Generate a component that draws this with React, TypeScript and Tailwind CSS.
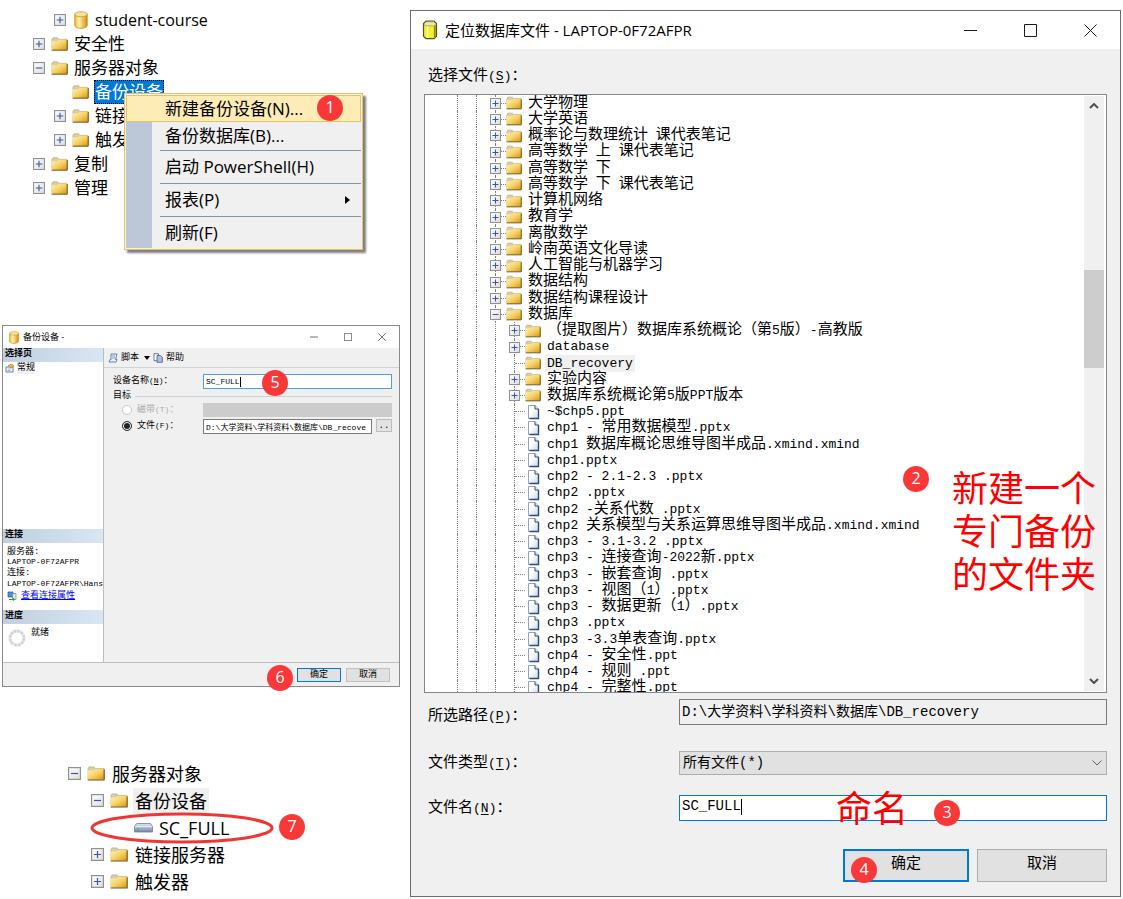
import { ReactNode } from "react";

const CJK_RUN = /([\u2e80-\uffef]+)/;

interface TreeNode {
  label: string;
  depth: number;
  kind: "folder" | "file";
  state?: "open" | "closed";
  selected?: boolean;
}

const folder = (
  label: string,
  depth: number,
  state?: "open" | "closed",
  selected = false,
): TreeNode => ({ label, depth, kind: "folder", state, selected });

const file = (label: string): TreeNode => ({ label, depth: 3, kind: "file" });

const nodes: TreeNode[] = [
  folder("大学物理", 2, "closed"),
  folder("大学英语", 2, "closed"),
  folder("概率论与数理统计 课代表笔记", 2, "closed"),
  folder("高等数学 上 课代表笔记", 2, "closed"),
  folder("高等数学 下", 2, "closed"),
  folder("高等数学 下 课代表笔记", 2, "closed"),
  folder("计算机网络", 2, "closed"),
  folder("教育学", 2, "closed"),
  folder("离散数学", 2, "closed"),
  folder("岭南英语文化导读", 2, "closed"),
  folder("人工智能与机器学习", 2, "closed"),
  folder("数据结构", 2, "closed"),
  folder("数据结构课程设计", 2, "closed"),
  folder("数据库", 2, "open"),
  folder("（提取图片）数据库系统概论（第5版）-高教版", 3, "closed"),
  folder("database", 3, "closed"),
  folder("DB_recovery", 3, undefined, true),
  folder("实验内容", 3, "closed"),
  folder("数据库系统概论第5版PPT版本", 3, "closed"),
  file("~$chp5.ppt"),
  file("chp1 - 常用数据模型.pptx"),
  file("chp1 数据库概论思维导图半成品.xmind.xmind"),
  file("chp1.pptx"),
  file("chp2 - 2.1-2.3 .pptx"),
  file("chp2 .pptx"),
  file("chp2 -关系代数 .pptx"),
  file("chp2 关系模型与关系运算思维导图半成品.xmind.xmind"),
  file("chp3 - 3.1-3.2 .pptx"),
  file("chp3 - 连接查询-2022新.pptx"),
  file("chp3 - 嵌套查询 .pptx"),
  file("chp3 - 视图（1）.pptx"),
  file("chp3 - 数据更新（1）.pptx"),
  file("chp3 .pptx"),
  file("chp3 -3.3单表查询.pptx"),
  file("chp4 - 安全性.ppt"),
  file("chp4 - 规则 .ppt"),
  file("chp4 - 完整性.ppt"),
];

// Chinese runs are set one step larger than the monospaced Latin runs
const Mixed = ({ text, small = false }: { text: string; small?: boolean }) => (
  <>
    {text.split(CJK_RUN).map((run, i) => {
      const cjk = i % 2 === 1;
      const size = small
        ? cjk
          ? "text-[9px]"
          : "text-[8px]"
        : cjk
          ? "text-[15px]"
          : "text-[13px]";
      return (
        <span key={i} className={size}>
          {run}
        </span>
      );
    })}
  </>
);

const HotLabel = ({
  text,
  hotKey,
  small = false,
}: {
  text: string;
  hotKey: string;
  small?: boolean;
}) => (
  <>
    <Mixed text={`${text}(`} small={small} />
    <u className={small ? "text-[8px]" : "text-[13px] underline-offset-2"}>{hotKey}</u>
    <Mixed text=")：" small={small} />
  </>
);

const Gradients = () => (
  <svg width="0" height="0" className="absolute" aria-hidden="true">
    <defs>
      <linearGradient id="folder" x1="0" y1="0" x2="1" y2="1">
        <stop offset="0" stopColor="#fff3b8" />
        <stop offset="0.5" stopColor="#f6d264" />
        <stop offset="1" stopColor="#d8930c" />
      </linearGradient>
      <linearGradient id="db" x1="0" y1="0" x2="1" y2="0">
        <stop offset="0" stopColor="#f0b93a" />
        <stop offset="0.35" stopColor="#fff0a8" />
        <stop offset="1" stopColor="#d78f08" />
      </linearGradient>
      <linearGradient id="page" x1="0" y1="0" x2="1" y2="1">
        <stop offset="0.4" stopColor="#ffffff" />
        <stop offset="1" stopColor="#c3d6ee" />
      </linearGradient>
      <linearGradient id="box" x1="0" y1="0" x2="1" y2="1">
        <stop offset="0" stopColor="#ffffff" />
        <stop offset="1" stopColor="#dcdcdc" />
      </linearGradient>
      <linearGradient id="drive" x1="0" y1="0" x2="0" y2="1">
        <stop offset="0" stopColor="#dfe6f2" />
        <stop offset="1" stopColor="#7484a8" />
      </linearGradient>
    </defs>
  </svg>
);

const FolderIcon = ({ className = "w-4 h-3.5" }: { className?: string }) => (
  <svg viewBox="0 0 17 14" className={`shrink-0 ${className}`} aria-hidden="true">
    <path d="M1 12V2.2L2 .8h4.6l1.2 1.6H16V12z" fill="#d9cfa6" stroke="#b7a777" strokeWidth="0.7" />
    <path d="M.6 4.2H6l1.6-1.4h8.8V13H.6z" fill="url(#folder)" />
    <path d="M.6 13.2h15.6V3" fill="none" stroke="#6f5318" strokeWidth="1" />
  </svg>
);

const FileIcon = () => (
  <svg viewBox="0 0 16 16" className="w-4 h-4 shrink-0" aria-hidden="true">
    <path d="M3.5 1.5h6.5l3.5 3.5v9.5h-10z" fill="url(#page)" stroke="#8fa3c2" />
    <path d="M10 1.5V5h3.5" fill="#e8eef7" stroke="#2f4d78" />
    <path d="M13.5 5v9.5h-9" fill="none" stroke="#2f4d78" strokeWidth="1.4" />
  </svg>
);

const DatabaseIcon = ({ className }: { className: string }) => (
  <svg viewBox="0 0 14 18" className={`shrink-0 ${className}`} aria-hidden="true">
    <path d="M.8 3.2v11.4c0 1.5 2.8 2.7 6.2 2.7s6.2-1.2 6.2-2.7V3.2z" fill="url(#db)" stroke="#b97c0a" strokeWidth="0.7" />
    <ellipse cx="7" cy="3.2" rx="6.2" ry="2.5" fill="#fbe39a" stroke="#c4902a" strokeWidth="0.7" />
  </svg>
);

const YellowCylinder = () => (
  <svg viewBox="0 0 16 20" className="w-4 h-5 shrink-0" aria-hidden="true">
    <path d="M1.5 3.5v12.8L4 18.6h8l2.5-2.3V3.5L12 1.2H4z" fill="#f3ee2e" stroke="#55550f" strokeWidth="1.2" />
    <path d="M1.8 4 4.2 1.8h7.6L14.2 4 12 5.8H4z" fill="#e9e9c0" stroke="#8f8f3a" strokeWidth="0.6" />
    <path d="M5.5 6.5v11" stroke="#ffffc8" strokeWidth="1.6" />
    <path d="M12.8 5.5V17" stroke="#8c8a12" strokeWidth="1.8" />
  </svg>
);

const Expander = ({
  open,
  label,
  className = "w-3 h-3",
}: {
  open: boolean;
  label: string;
  className?: string;
}) => (
  <button type="button" aria-label={label} aria-expanded={open} className={`shrink-0 ${className}`}>
    <svg viewBox="0 0 11 11" className="w-full h-full block">
      <rect x="0.5" y="0.5" width="10" height="10" fill="url(#box)" stroke="#919191" />
      <path d={open ? "M2.5 5.5h6" : "M2.5 5.5h6M5.5 2.5v6"} stroke="#3a57a5" strokeWidth="1" />
    </svg>
  </button>
);

const Badge = ({ n, className }: { n: number; className: string }) => (
  <span
    className={`absolute w-[26px] h-[26px] rounded-full bg-[#fb3838] text-white text-base leading-6 text-center font-['Open_Sans',sans-serif] ${className}`}
  >
    {n}
  </span>
);

const WindowControls = ({ className, iconClass }: { className: string; iconClass: string }) => (
  <div className="ml-auto flex self-stretch">
    {[
      { name: "最小化", d: "M0 6.5h13" },
      { name: "最大化", d: "M.5 .5h12v12H.5z" },
      { name: "关闭", d: "M.5 .5l12 12M12.5 .5l-12 12" },
    ].map(({ name, d }) => (
      <button key={name} type="button" aria-label={name} className={`flex items-center justify-center ${className}`}>
        <svg viewBox="0 0 13 13" className={iconClass}>
          <path d={d} fill="none" stroke="#1a1a1a" />
        </svg>
      </button>
    ))}
  </div>
);

const ExplorerRow = ({
  label,
  indent,
  state,
  icon,
  children,
}: {
  label: string;
  indent: string;
  state?: "open" | "closed";
  icon?: ReactNode;
  children?: ReactNode;
}) => (
  <li className={`flex items-center h-6 gap-[6px] ${indent}`}>
    {state ? <Expander open={state === "open"} label={label} /> : <span className="w-3" />}
    <span className="w-[17px] flex justify-center">{icon ?? <FolderIcon className="w-[17px] h-3.5" />}</span>
    {children ?? <span>{label}</span>}
  </li>
);

const ContextMenu = () => (
  <div
    role="menu"
    className="absolute left-[124px] top-[93px] w-[239px] border border-[#e5c365] bg-[#f0f0f0] p-px shadow-[3px_3px_2px_rgba(0,0,0,0.5)]"
  >
    <button
      type="button"
      role="menuitem"
      className="relative block w-full h-[27px] pl-[38px] text-left border border-[#e5c365] bg-[#fdecb5]"
    >
      新建备份设备(N)...
      <Badge n={1} className="left-[190px] -top-px" />
    </button>
    <div className="border-l-[26px] border-[#bcc7d8] pl-2">
      <button type="button" role="menuitem" className="block w-full h-[28px] pl-[5px] text-left">
        备份数据库(B)...
      </button>
      <hr className="border-t-1 border-[#8595ad]" />
      <button type="button" role="menuitem" className="block w-full h-8 pl-[5px] text-left">
        启动 PowerShell(H)
      </button>
      <hr className="border-t-1 border-[#8595ad]" />
      <button type="button" role="menuitem" className="flex items-center justify-between w-full h-8 pl-[5px] pr-[11px]">
        报表(P)
        <svg viewBox="0 0 5 8" className="w-[5px] h-2">
          <path d="M0 0l5 4-5 4z" />
        </svg>
      </button>
      <hr className="border-t-1 border-[#8595ad]" />
      <button type="button" role="menuitem" className="block w-full h-[31px] pl-[5px] text-left">
        刷新(F)
      </button>
    </div>
  </div>
);

const ObjectExplorer = () => (
  <section className="relative pt-2 text-[17px] leading-6 font-['Open_Sans','Noto_Sans_CJK_SC',sans-serif]">
    <ul>
      <ExplorerRow
        label="student-course"
        indent="pl-[54px]"
        state="closed"
        icon={<DatabaseIcon className="w-3.5 h-[18px]" />}
      >
        <span className="text-base">student-course</span>
      </ExplorerRow>
      <ExplorerRow label="安全性" indent="pl-[33px]" state="closed" />
      <ExplorerRow label="服务器对象" indent="pl-[33px]" state="open" />
      <ExplorerRow label="备份设备" indent="pl-[54px]">
        <span className="-ml-px px-px bg-[#0078d7] text-white outline-1 outline-dotted -outline-offset-1 outline-black">
          备份设备
        </span>
      </ExplorerRow>
      <ExplorerRow label="链接服务器" indent="pl-[54px]" state="closed" />
      <ExplorerRow label="触发器" indent="pl-[54px]" state="closed" />
      <ExplorerRow label="复制" indent="pl-[33px]" state="closed" />
      <ExplorerRow label="管理" indent="pl-[33px]" state="closed" />
    </ul>
    <ContextMenu />
  </section>
);

const PanelHeader = ({ children }: { children: ReactNode }) => (
  <h3 className="h-3.5 pl-0.5 leading-3 text-[9px] font-bold bg-linear-to-r from-[#bfcfdf] to-[#d9e7f4]">
    {children}
  </h3>
);

const BackupDeviceDialog = () => (
  <section className="relative ml-0.5 border border-[#8a8a8a] bg-[#f0f0f0] text-[9px] leading-3 font-['Liberation_Mono','Noto_Sans_CJK_SC',monospace]">
    <header className="flex items-center h-[22px] pl-1.5 bg-white">
      <DatabaseIcon className="w-2.5 h-[13px]" />
      <h2 className="ml-1 font-['Open_Sans','Noto_Sans_CJK_SC',sans-serif]">备份设备 -</h2>
      <WindowControls className="w-[34px]" iconClass="w-2 h-2" />
    </header>
    <div className="flex h-[315px] border-b border-[#bdbdbd]">
      <aside className="w-[101px] shrink-0 flex flex-col bg-white border-r border-[#bdbdbd]">
        <PanelHeader>选择页</PanelHeader>
        <div className="flex items-center gap-0.5 pl-0.5 h-3">
          <svg viewBox="0 0 10 10" className="w-2.5 h-2.5">
            <path d="M1 4h7v5H1z" fill="#fff" stroke="#5d7fae" />
            <path d="M2.5 6h4M2.5 7.5h3" stroke="#5d7fae" strokeWidth="0.6" />
            <path d="M3 2.5l4-1.5 2 2-3 2z" fill="#f0b73c" stroke="#a9761a" strokeWidth="0.6" />
          </svg>
          <span className="bg-[#f0f0f0]">常规</span>
        </div>
        <div className="mt-auto">
          <PanelHeader>连接</PanelHeader>
          <div className="pl-1 pt-1 h-[67px]">
            <p className="leading-[10px]">服务器:</p>
            <p className="leading-[10px] text-[8px]">LAPTOP-0F72AFPR</p>
            <p className="leading-3">连接:</p>
            <p className="leading-[9px] text-[8px] whitespace-nowrap overflow-hidden">LAPTOP-0F72AFPR\Hans</p>
            <p className="flex items-center gap-1 mt-0.5 h-3">
              <svg viewBox="0 0 10 10" className="w-2.5 h-2.5">
                <path d="M1 1h5v5H1z" fill="#4a8fe0" stroke="#35557f" strokeWidth="0.7" />
                <path d="M5.5 2.5h3.5v6H5.5z" fill="#dbe6f2" stroke="#6b86a8" strokeWidth="0.7" />
                <path d="M2 8.5h5M5.5 6.8L7.5 8.5 5.5 10" fill="none" stroke="#2f9c35" />
              </svg>
              <a href="#properties" className="text-[#0000ff] underline">
                查看连接属性
              </a>
            </p>
          </div>
          <PanelHeader>进度</PanelHeader>
          <div className="flex gap-[5px] pl-[5px] pt-[3px] h-[38px]">
            <svg viewBox="0 0 18 18" className="w-[18px] h-[18px] mt-0.5">
              <circle cx="9" cy="9" r="7" fill="none" stroke="#d4d4d4" strokeWidth="3" strokeDasharray="3 0.66" />
            </svg>
            <span>就绪</span>
          </div>
        </div>
      </aside>

      <div className="flex-1 min-w-0">
        <div className="flex items-center h-5 pl-1 gap-[3px] border-b border-[#cfd3da]">
          <button type="button" className="flex items-center gap-[3px]">
            <svg viewBox="0 0 10 10" className="w-2.5 h-2.5">
              <path d="M3 1h6L7.5 6.5H9L8 9H1l1-2.5h1z" fill="#e8f0fb" stroke="#3e68a8" strokeWidth="0.8" />
              <path d="M4 3h3M4 5h3" stroke="#3e68a8" strokeWidth="0.6" />
            </svg>
            脚本
            <svg viewBox="0 0 6 4" className="ml-0.5 w-1.5 h-1">
              <path d="M0 0h6L3 4z" />
            </svg>
          </button>
          <button type="button" className="flex items-center gap-[3px]">
            <svg viewBox="0 0 10 10" className="w-2.5 h-2.5">
              <path d="M1 .7h4.5v7H1z" fill="#fff" stroke="#41588e" strokeWidth="0.8" />
              <path d="M4 2.5h3.5l1.8 1.8v5H4z" fill="#a9bfe4" stroke="#41588e" strokeWidth="0.8" />
            </svg>
            帮助
          </button>
        </div>
        <form className="grid grid-cols-[90px_1fr] gap-y-px pl-[9px] pr-[7px] pt-1.5">
          <label htmlFor="device" className="leading-[14px]">
            <HotLabel text="设备名称" hotKey="N" small />
          </label>
          <div className="relative">
            <input
              id="device"
              defaultValue="SC_FULL"
              className="block w-full h-[15px] pl-0.5 text-[8px] bg-white border border-[#4f9fe0] outline-none"
            />
            <span className="absolute left-[37px] top-[3px] w-px h-2.5 bg-black" />
          </div>
          <div className="col-span-2 flex items-center gap-1 h-3">
            目标
            <span className="flex-1 border-t border-[#d0d0d0]" />
          </div>
          <label className="flex items-center gap-[5px] pl-[9px] text-[#a8a8a8]">
            <input
              type="radio"
              name="target"
              disabled
              className="appearance-none w-2.5 h-2.5 rounded-full border border-[#c8c8c8] bg-white"
            />
            <span><Mixed text="磁带(T)：" small /></span>
          </label>
          <select aria-label="磁带" disabled className="appearance-none h-3.5 bg-[#cccccc]">
            <option></option>
          </select>
          <label className="flex items-center gap-[5px] pl-[9px]">
            <input
              type="radio"
              name="target"
              defaultChecked
              className="appearance-none w-2.5 h-2.5 rounded-full border border-[#333] bg-[#222] shadow-[inset_0_0_0_1px_#fff]"
            />
            <span><Mixed text="文件(F)：" small /></span>
          </label>
          <div className="flex gap-1 pt-px">
            <input
              aria-label="文件路径"
              defaultValue="D:\大学资料\学科资料\数据库\DB_recove"
              className="flex-1 min-w-0 h-[15px] pl-0.5 text-[8px] bg-white border border-[#7a7a7a]"
            />
            <button type="button" className="w-4 h-[13px] leading-[6px] border border-[#bdbdbd] bg-[#e3e3e3]">
              ..
            </button>
          </div>
        </form>
      </div>
    </div>
    <footer className="flex justify-end gap-[5px] h-[23px] pt-[5px] pr-[9px]">
      <button type="button" className="w-11 h-3.5 leading-none border border-[#0078d7] bg-[#e1e1e1]">
        确定
      </button>
      <button type="button" className="w-11 h-3.5 leading-none border border-[#c0c0c0] bg-[#e1e1e1]">
        取消
      </button>
    </footer>
    <Badge n={5} className="left-[259px] top-[44px]" />
    <Badge n={6} className="left-[264px] top-[339px]" />
  </section>
);

const ResultRow = ({
  label,
  indent,
  state,
  selected = false,
}: {
  label: string;
  indent: string;
  state: "open" | "closed";
  selected?: boolean;
}) => (
  <li className={`flex items-center h-[27px] ${indent}`}>
    <Expander open={state === "open"} label={label} className="w-[13px] h-[13px]" />
    <FolderIcon className="ml-1.5 mr-[5px] w-[18px] h-[15px]" />
    <span className={selected ? "px-0.5 bg-[#f0f0f0]" : "px-0.5"}>{label}</span>
  </li>
);

const ResultTree = () => (
  <section className="relative text-[18px] leading-[26px] font-['Open_Sans','Noto_Sans_CJK_SC',sans-serif]">
    <ul>
      <ResultRow label="服务器对象" indent="pl-[68px]" state="open" />
      <ResultRow label="备份设备" indent="pl-[91px]" state="open" selected />
      <li className="flex items-center h-[27px] gap-[6px] pl-[134px]">
        <svg viewBox="0 0 19 10" className="w-[19px] h-2.5">
          <path d="M2.5.5h14l2 3v5.5H.5V3.5z" fill="url(#drive)" stroke="#6d7da0" strokeWidth="0.8" />
          <path d="M1 3.6h17" stroke="#f5f8fd" strokeWidth="0.8" />
          <path d="M3 6.3h2" stroke="#39c24a" strokeWidth="1.4" />
        </svg>
        SC_FULL
      </li>
      <ResultRow label="链接服务器" indent="pl-[91px]" state="closed" />
      <ResultRow label="触发器" indent="pl-[91px]" state="closed" />
    </ul>
    <svg viewBox="0 0 184 32" className="absolute left-[90px] top-[52px] w-[184px] h-8" aria-hidden="true">
      <ellipse cx="92" cy="16" rx="90" ry="14" fill="none" stroke="#f03535" strokeWidth="3" />
    </svg>
    <Badge n={7} className="left-[279px] top-[54px]" />
  </section>
);

const Guide = () => <span className="self-stretch w-[19px] shrink-0 border-l border-dotted border-[#808080]" />;

const FileTreeRow = ({ node }: { node: TreeNode }) => (
  <li className="flex items-center min-h-0 leading-4 whitespace-nowrap">
    {Array.from({ length: node.depth }, (_, i) => (
      <Guide key={i} />
    ))}
    <span className="relative self-stretch w-[11px] shrink-0 flex items-center border-l border-dotted border-[#808080]">
      <span className="w-full border-t border-dotted border-[#808080]" />
      {node.state && (
        <Expander
          open={node.state === "open"}
          label={node.label}
          className="absolute -left-1.5 top-[3px] w-[11px] h-[11px]"
        />
      )}
    </span>
    {node.kind === "folder" ? <FolderIcon /> : <FileIcon />}
    <span className={node.selected ? "ml-1 px-0.5 bg-[#f0f0f0]" : "ml-1 px-0.5"}>
      <Mixed text={node.label} />
    </span>
  </li>
);

const ScrollButton = ({ label, d }: { label: string; d: string }) => (
  <button type="button" aria-label={label} className="flex items-center justify-center h-5 w-full">
    <svg viewBox="0 0 10 6" className="w-2.5 h-1.5">
      <path d={d} fill="none" stroke="#505050" strokeWidth="2" />
    </svg>
  </button>
);

const LocateFileDialog = () => (
  <section className="relative flex-1 min-w-0 self-start mt-2.5 ml-2.5 mr-0.5 border border-[#6b6b6b] bg-[#f0f0f0] font-['Liberation_Mono','Noto_Sans_CJK_SC',monospace]">
    <header className="flex items-center h-[38px] pl-[11px] bg-white">
      <YellowCylinder />
      <h2 className="ml-[7px] text-[15px] font-['Open_Sans','Noto_Sans_CJK_SC',sans-serif]">
        定位数据库文件 - LAPTOP-0F72AFPR
      </h2>
      <WindowControls className="w-[60px]" iconClass="w-[13px] h-[13px]" />
    </header>

    <div className="px-[13px] pb-[14px]">
      <h3 className="pt-[17px] pb-[7px] pl-1 h-[45px] leading-5">
        <HotLabel text="选择文件" hotKey="S" />
      </h3>
      <div className="relative flex h-[599px] overflow-hidden border border-[#828790] bg-white">
        <ul className="flex-1 min-w-0 grid auto-rows-fr h-[601px] pl-8">
          {nodes.map((node) => (
            <FileTreeRow key={node.label} node={node} />
          ))}
        </ul>
        <div className="flex flex-col w-[20px] my-px mr-0.5 bg-[#f0f0f0]">
          <ScrollButton label="向上滚动" d="M1 5l4-4 4 4" />
          <div className="flex-1 pt-[154px]">
            <div className="h-[98px] bg-[#cdcdcd]" />
          </div>
          <ScrollButton label="向下滚动" d="M1 1l4 4 4-4" />
        </div>
      </div>

      <form>
        <div className="flex items-end mt-1.5">
          <label htmlFor="path" className="w-[255px] pl-1 leading-4">
            <HotLabel text="所选路径" hotKey="P" />
          </label>
          <input
            id="path"
            readOnly
            value="D:\大学资料\学科资料\数据库\DB_recovery"
            className="flex-1 min-w-0 h-[26px] pl-0.5 pb-1 text-sm bg-[#f0f0f0] border border-[#7a7a7a]"
          />
        </div>
        <div className="flex items-center mt-[26px]">
          <label htmlFor="type" className="w-[255px] pl-1 leading-4">
            <HotLabel text="文件类型" hotKey="T" />
          </label>
          <div className="relative flex-1">
            <select
              id="type"
              className="appearance-none block w-full h-6 pl-[3px] text-sm leading-5 bg-[#e1e1e1] border border-[#adadad]"
            >
              <option>所有文件(*)</option>
            </select>
            <svg viewBox="0 0 10 6" className="absolute right-[5px] top-[9px] w-2.5 h-1.5 pointer-events-none">
              <path d="M.5 .5L5 5 9.500 .5" fill="none" stroke="#606060" />
            </svg>
          </div>
        </div>
        <div className="flex items-center mt-5">
          <label htmlFor="name" className="w-[255px] pl-1 leading-4">
            <HotLabel text="文件名" hotKey="N" />
          </label>
          <div className="relative flex-1">
            <input
              id="name"
              defaultValue="SC_FULL"
              className="block w-full h-[26px] pl-0.5 pb-1 text-sm bg-white border border-[#0078d7] outline-none"
            />
            <span className="absolute left-[62px] top-1 w-px h-4 bg-black" />
          </div>
        </div>
        <div className="flex justify-end gap-2 mt-7">
          <button type="button" className="w-[126px] h-[33px] text-[15px] bg-[#e1e1e1] border-2 border-[#0078d7]">
            确定
          </button>
          <button type="button" className="w-[130px] h-[33px] text-[15px] bg-[#e1e1e1] border border-[#adadad]">
            取消
          </button>
        </div>
      </form>
    </div>

    {/* Notes laid over the dialog */}
    <p className="absolute right-[22px] top-[454px] w-[146px] text-4xl leading-[43px] text-[#ff0000] font-['Noto_Sans_CJK_SC',sans-serif]">
      新建一个专门备份的文件夹
    </p>
    <p className="absolute right-[212px] top-[774px] text-4xl leading-[43px] text-[#ff0000] font-['Noto_Sans_CJK_SC',sans-serif]">
      命名
    </p>
    <Badge n={2} className="right-[191px] top-[455px]" />
    <Badge n={3} className="right-[160px] top-[789px]" />
    <Badge n={4} className="right-[243px] top-[846px]" />
  </section>
);

export default function App() {
  return (
    <main className="flex min-h-screen bg-white text-black">
      <Gradients />
      <div className="w-[400px] shrink-0">
        <ObjectExplorer />
        <div className="mt-[125px]">
          <BackupDeviceDialog />
        </div>
        <div className="mt-[73px]">
          <ResultTree />
        </div>
      </div>
      <LocateFileDialog />
    </main>
  );
}
